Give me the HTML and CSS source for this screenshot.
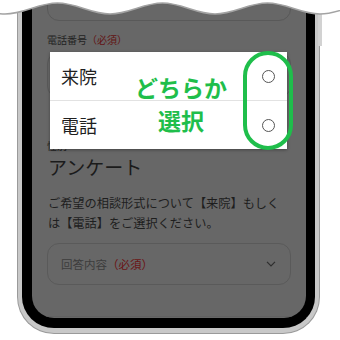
FILE: index.html
```html
<!DOCTYPE html>
<html lang="ja">
<head>
<meta charset="utf-8">
<title>相談形式の選択</title>
<link rel="stylesheet" href="styles.css">
</head>
<body>
<div class="stage">
  <div class="phone">
    <div class="screen">
      <div class="field field-prev"></div>
      <div class="label">電話番号<span class="req">（必須）</span></div>
      <div class="field field-tel"></div>
      <div class="label">性別</div>
      <h2 class="heading">アンケート</h2>
      <p class="lead">ご希望の相談形式について【来院】もしく<br>は【電話】をご選択ください。</p>
      <div class="select">
        <span class="placeholder">回答内容<span class="req">（必須）</span></span>
        <svg class="chevron" width="10" height="6" viewBox="0 0 10 6"><polyline points="1,0.8 5,4.8 9,0.8" fill="none" stroke="#2e2e2e" stroke-width="1.2"/></svg>
      </div>
      <div class="next-field"></div>
    </div>
  </div>
  <div class="side-button"></div>
  <div class="picker">
    <div class="option"><span>来院</span><span class="radio"></span></div>
    <div class="option"><span>電話</span><span class="radio"></span></div>
  </div>
  <div class="callout">どちらか<br>選択</div>
  <div class="ring"></div>
  <svg class="wave" width="340" height="20" viewBox="0 0 340 20">
    <path d="M-47.5,3 C-28.5,3 -14,14 5,14 C24,14 38.5,3 57.5,3 C76.5,3 91,14 110,14 C129,14 143.5,3 162.5,3 C181.5,3 196,14 215,14 C234,14 248.5,3 267.5,3 C286.5,3 301,14 320,14 C339,14 353.5,3 372.5,3 L372.5,-4 L-47.5,-4 Z" fill="#fff" stroke="#a3a3a3" stroke-width="1.5"/>
  </svg>
</div>
</body>
</html>
```

FILE: styles.css
```css
* { box-sizing: border-box; }
html, body { margin: 0; padding: 0; background: #fff; }
body { font-family: "Noto Sans CJK JP", "Noto Sans", sans-serif; }

.stage {
  position: relative;
  width: 340px;
  height: 340px;
  overflow: hidden;
  background: #fff;
}

.phone {
  width: 301px;
  margin: -20px 0 0 18px;
  border: 4px solid #c8c8c8;
  border-top: none;
  border-bottom-width: 5px;
  box-shadow: 0 0 0 1px #9a9a9a;
  border-radius: 0 0 36px 36px;
  background: #000;
  padding: 0 9px 10px 10px;
}

.screen {
  height: 338px;
  background: #676767;
  border-radius: 0 0 22px 22px;
  padding: 0 14px;
  overflow: hidden;
  display: flex;
  flex-direction: column;
}

.field {
  flex: none;
  border: 1px solid #595959;
  border-radius: 12px;
  margin: 0 1px 0 1px;
}
.field-prev { height: 41px; }
.field-tel { height: 46px; margin-top: 5px; }

.label {
  flex: none;
  margin-top: 12px;
  font-size: 10px;
  line-height: 14px;
  color: #232323;
  padding-left: 1px;
}
.field-tel + .label { margin-top: 41px; margin-bottom: 1px; }

.req { color: #621313; }

.heading {
  margin: 0;
  font-size: 19px;
  line-height: 26px;
  font-weight: 400;
  color: #1b1b1b;
  padding-left: 2px;
}

.lead {
  margin: 13px 0 0;
  font-size: 12.2px;
  line-height: 20px;
  color: #1e1e1e;
  padding-left: 2px;
}

.select {
  flex: none;
  margin: 10px 1px 0 1px;
  height: 42px;
  border: 1px solid #5a5a5a;
  border-radius: 12px;
  padding: 0 14px 0 13px;
  display: flex;
  align-items: center;
  justify-content: space-between;
}
.placeholder {
  font-size: 11.5px;
  color: #3c3c3c;
}
.placeholder .req { color: #6a1414; }

.next-field {
  margin-top: 31px;
  border-top: 1px solid #616161;
  flex: 1;
}

.side-button {
  position: absolute;
  left: 318px;
  top: 10px;
  width: 4px;
  height: 36px;
  background: #d2d2d2;
}

.picker {
  position: absolute;
  left: 50px;
  top: 52px;
  width: 237px;
  background: #fff;
  box-shadow: 0 1px 3px rgba(0, 0, 0, 0.35);
}
.option {
  height: 48px;
  display: flex;
  align-items: center;
  justify-content: space-between;
  padding: 0 12px 0 11px;
  font-size: 18px;
  color: #1f1f1f;
}
.option + .option {
  border-top: 1px solid #e2e2e2;
  height: 49px;
}
.radio {
  width: 13px;
  height: 13px;
  border: 1.3px solid #555;
  border-radius: 50%;
}

.callout {
  position: absolute;
  left: 131px;
  top: 71px;
  width: 100px;
  text-align: center;
  font-size: 23px;
  line-height: 33px;
  font-weight: 700;
  color: #1fbe4b;
}

.ring {
  position: absolute;
  left: 243px;
  top: 51px;
  width: 50px;
  height: 99px;
  border: 4px solid #1fbe4b;
  border-radius: 25px;
}

.wave {
  position: absolute;
  left: 0;
  top: 0;
}
```
